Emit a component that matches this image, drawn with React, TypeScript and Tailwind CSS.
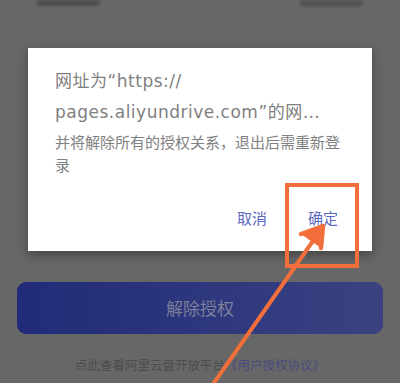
import React from "react";

export default function App() {
  return (
    <div
      className="relative w-[400px] h-[383px] overflow-hidden bg-[#676767] flex flex-col"
      style={{ fontFamily: '"Noto Sans CJK SC", "Noto Sans", sans-serif' }}
    >
      {/* top remnants */}
      <div className="flex justify-between px-[37px] h-[7px] shrink-0">
        <div className="w-[63px] h-[6px] bg-[#4f4f4f] rounded-b-sm blur-[1px]" />
        <div className="w-[63px] h-[7px] bg-[#555555] rounded-b-sm blur-[1px]" />
      </div>

      {/* dialog */}
      <div className="mt-[41px] mx-[28px] h-[203px] shrink-0 bg-white shadow-[0_4px_10px_rgba(0,0,0,0.35)] flex flex-col px-[27px] pt-[18px]">
        <div
          className="text-[17px] leading-[31px] text-[#7f7f7f] tracking-[0.5px] whitespace-nowrap"
          style={{ fontFamily: '"DejaVu Sans", "Noto Sans CJK SC", sans-serif' }}
        >
          <div>网址为“https://</div>
          <div>pages.aliyundrive.com”的网…</div>
        </div>
        <p className="mt-[2px] text-[15px] leading-[23px] text-[#808080]">
          并将解除所有的授权关系，退出后需重新登录
        </p>
        <div className="mt-[31px] flex justify-end gap-[41px] pr-[7px] text-[15px] leading-[22px] text-[#5b68c2]">
          <span>取消</span>
          <span>确定</span>
        </div>
      </div>

      {/* main button */}
      <div className="mt-[31px] mx-[17px] h-[52px] shrink-0 rounded-[9px] bg-gradient-to-r from-[#212b78] to-[#3a4281] flex items-center justify-center">
        <span className="text-[17px] text-[#7c7f9b]">解除授权</span>
      </div>

      {/* agreement text */}
      <div className="mt-[22px] text-center text-[12.5px] leading-[18px] text-[#4c4c4c]">
        点此查看阿里云盘开放平台<span className="text-[#474c7e]">《用户授权协议》</span>
      </div>

      {/* annotation: orange box */}
      <div className="absolute left-[285px] top-[183px] w-[74px] h-[85px] border-[4px] border-[#f26f3b]" />

      {/* annotation: arrow */}
      <svg
        className="absolute left-0 top-0"
        width="400"
        height="383"
        viewBox="0 0 400 383"
        fill="none"
      >
        <line x1="209" y1="390" x2="322" y2="228" stroke="#f26f3b" strokeWidth="4" strokeLinecap="round" />
        <polyline
          points="301,234 323,226 321,248"
          stroke="#f26f3b"
          strokeWidth="4.5"
          strokeLinecap="round"
          strokeLinejoin="round"
          fill="#f26f3b"
        />
      </svg>
    </div>
  );
}
